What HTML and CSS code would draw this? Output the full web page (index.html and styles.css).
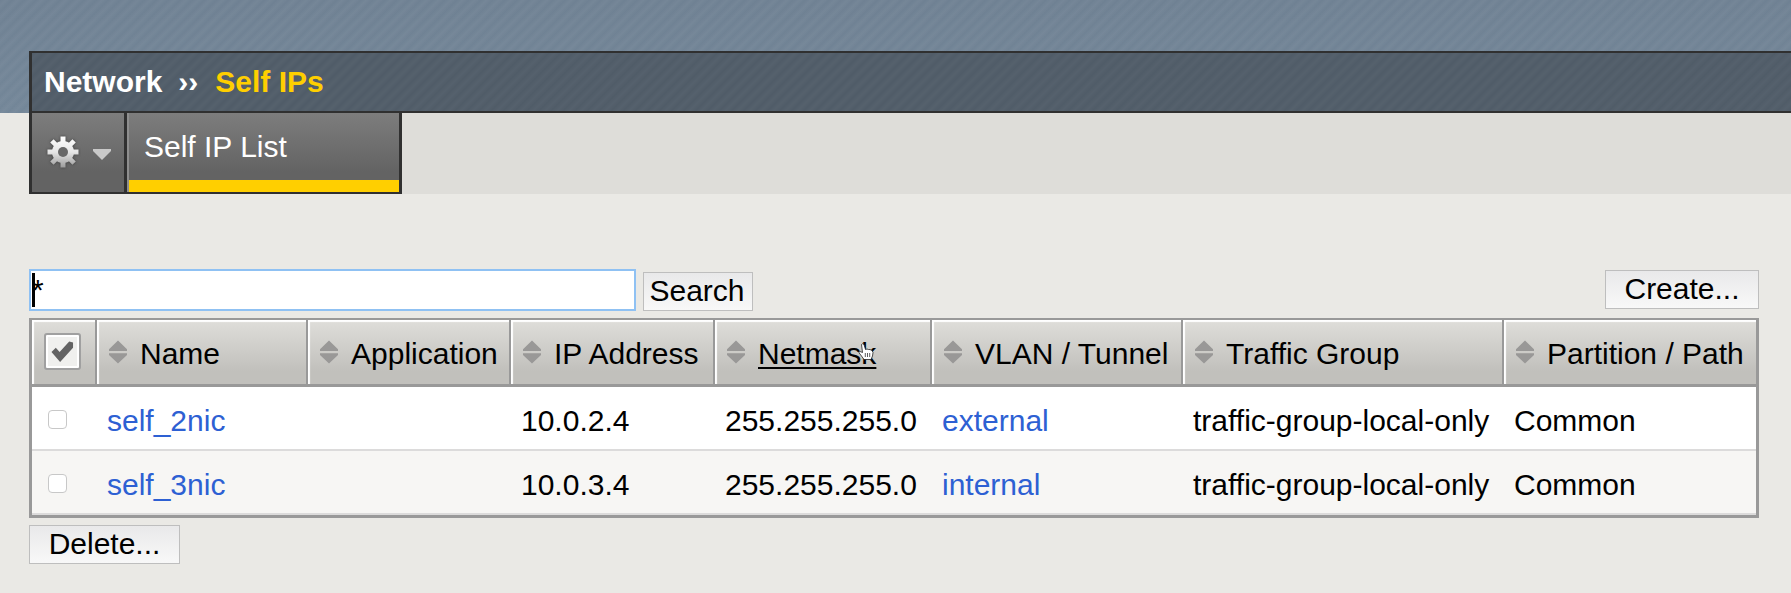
FILE: index.html
```html
<!DOCTYPE html>
<html lang="en">
<head>
<meta charset="utf-8">
<title>Self IPs</title>
<link rel="stylesheet" href="styles.css">
</head>
<body>
<svg class="defs" width="0" height="0">
  <symbol id="sort" viewBox="0 0 18 24"><path d="M9 0.5L18 9.2V11H0V9.2ZM0 13.2H18V15L9 23.5L0 15Z" fill="#999897"/></symbol>
</svg>
<header class="banner">
  <div class="crumbs"><span>Network</span><span class="sep">››</span><span class="here">Self IPs</span></div>
</header>
<nav class="tabs">
  <div class="tabgroup">
    <div class="gear">
      <svg width="36" height="36" viewBox="-18 -18 36 36">
        <defs><linearGradient id="g" x1="0" y1="-16" x2="0" y2="16" gradientUnits="userSpaceOnUse"><stop offset="0" stop-color="#fff"/><stop offset=".5" stop-color="#e6e6e6"/><stop offset="1" stop-color="#999"/></linearGradient></defs>
        <g class="cog">
          <g fill="url(#g)">
            <circle r="11"/>
            <path d="M-2.5-15.5h5v31h-5zM-15.5-2.5h31v5h-31z"/>
            <path d="M-12.8-9.4L-9.4-12.8L12.8 9.4L9.4 12.8ZM9.4-12.8L12.8-9.4L-9.4 12.8L-12.8 9.4Z"/>
          </g>
          <circle r="5" fill="#686868"/>
        </g>
      </svg>
      <svg class="caret" width="18" height="11" viewBox="0 0 18 11"><path d="M0 0H18V2L9 11L0 2Z" fill="#c9c9c9"/></svg>
    </div>
    <div class="tab">Self IP List</div>
  </div>
</nav>
<main class="content">
  <div class="toolbar">
    <div class="field"><i class="caretbar"></i><span>*</span></div>
    <div class="btn search">Search</div>
    <div class="btn create">Create...</div>
  </div>
  <div class="table">
    <div class="row head">
      <div class="th check"><div class="checkbtn"><svg width="24" height="24" viewBox="0 0 24 24"><path d="M0.500 12L5 7.500L9 12L19 1L23 2V7.500L9.500 22.500Z" fill="#636363"/></svg></div></div>
      <div class="th"><svg class="sort"><use href="#sort"/></svg><span>Name</span></div>
      <div class="th"><svg class="sort"><use href="#sort"/></svg><span>Application</span></div>
      <div class="th"><svg class="sort"><use href="#sort"/></svg><span>IP Address</span></div>
      <div class="th"><svg class="sort"><use href="#sort"/></svg><span class="hover">Netmask</span>
        <svg class="cursor" width="16" height="18" viewBox="0 0 16 18"><path d="M3.500 1.500Q4.500 0 6 1.500L7.500 6.500L9 6L10.500 6.500L12 6.500L14 7.500L15 9.500L14.500 13L13 16.500H6L3.500 13L.8 9.500Q1.500 7.500 4.500 9.500Z" fill="#fff" stroke="#222" stroke-width=".8"/><path d="M7.300 10V14M9.500 10V14M11.700 10V14" stroke="#333" stroke-width=".8"/></svg></div>
      <div class="th"><svg class="sort"><use href="#sort"/></svg><span>VLAN / Tunnel</span></div>
      <div class="th"><svg class="sort"><use href="#sort"/></svg><span>Traffic Group</span></div>
      <div class="th"><svg class="sort"><use href="#sort"/></svg><span>Partition / Path</span></div>
    </div>
    <div class="row">
      <div class="td check"><i class="box"></i></div><div class="td link">self_2nic</div><div class="td"></div><div class="td">10.0.2.4</div><div class="td">255.255.255.0</div><div class="td link">external</div><div class="td">traffic-group-local-only</div><div class="td">Common</div>
    </div>
    <div class="row alt">
      <div class="td check"><i class="box"></i></div><div class="td link">self_3nic</div><div class="td"></div><div class="td">10.0.3.4</div><div class="td">255.255.255.0</div><div class="td link">internal</div><div class="td">traffic-group-local-only</div><div class="td">Common</div>
    </div>
  </div>
  <div class="btn delete">Delete...</div>
</main>
</body>
</html>
```

FILE: styles.css
```css
* { box-sizing: border-box; }
body {
  margin: 0;
  width: 1791px;
  height: 593px;
  overflow: hidden;
  background: #eae9e5;
  color: #000;
  font: 30px/34px "Liberation Sans", Arial, sans-serif;
  white-space: nowrap;
}
.defs { position: absolute; }
.banner {
  height: 113px;
  padding: 51px 0 0 29px;
  background:
    repeating-linear-gradient(135deg, rgba(255,255,255,0) 0, rgba(255,255,255,.045) 4.250px, rgba(255,255,255,0) 8.500px),
    linear-gradient(#6f8193, #738698);
}
.crumbs {
  display: flex;
  height: 62px;
  padding: 12px 0 0 12px;
  border: solid #303030;
  border-width: 2px 0 2px 3px;
  background:
    repeating-linear-gradient(135deg, rgba(255,255,255,0) 0, rgba(255,255,255,.03) 4.250px, rgba(255,255,255,0) 8.500px),
    #505c68;
  color: #fff;
  font-weight: bold;
}
.sep { margin: 0 17px 0 16px; }
.here { color: #ffcf00; }
.tabs {
  height: 81px;
  margin-left: 29px;
  background: #deddd9;
}
.tabgroup {
  display: flex;
  width: 373px;
  height: 81px;
  border: solid #303030;
  border-width: 0 3px 2px;
}
.gear {
  display: flex;
  align-items: center;
  width: 95px;
  padding: 0 0 2px 13px;
  border-right: 3px solid #303030;
  background: linear-gradient(#7d7d7d, #636363 75%);
}
.cog { filter: drop-shadow(0 0 1.500px #3c3c3c); }
.caret { margin: 5px 0 0 12px; }
.tab {
  flex: 1;
  padding: 17px 0 0 15px;
  border-left: 2px solid #8e8e8e;
  background: linear-gradient(#ffcf00, #ffcf00) left bottom / 100% 12px no-repeat, linear-gradient(#7d7d7d, #636363 75%);
  color: #fff;
}
.content { padding: 75px 32px 0 29px; }
.toolbar {
  display: flex;
  height: 49px;
}
.field {
  display: flex;
  width: 607px;
  height: 42px;
  padding: 2px 0 0 1px;
  border: 2px solid #8fc1f3;
  background: #fff;
}
.caretbar {
  width: 3px;
  height: 34px;
  background: #000;
}
.field span { margin-left: -3px; }
.btn {
  height: 39px;
  padding-top: 1px;
  border: 1px solid #bebebe;
  background: linear-gradient(#e9e9ea, #f8f8f8);
  text-align: center;
}
.search {
  width: 110px;
  padding-right: 2px;
  margin: 3px 0 0 7px;
}
.create { width: 154px; margin: 1px 0 0 auto; }
.delete { width: 151px; margin-top: 7px; }
.table {
  border: 3px solid #999;
  border-top-width: 2px;
}
.row {
  display: grid;
  grid-template-columns: 63px 211px 203px 204px 217px 251px 321px 254px;
  height: 64px;
  border-bottom: 2px solid #dcdbdb;
  background: #fff;
}
.alt { background: #f7f6f4; }
.head {
  height: 67px;
  border-bottom: 3px solid #999;
}
.th {
  position: relative;
  display: flex;
  align-items: center;
  padding: 0 0 0 12px;
  border-left: 2px solid #999;
  box-shadow: inset 3px 3px 1px -1px #fff;
  background: linear-gradient(#dfdeda, #c1c0bc 80%);
}
.th.check {
  padding: 0 0 2px 12px;
  border-left: 0;
}
.th span { padding-top: 3px; }
.sort {
  width: 18px;
  height: 24px;
  margin: 0 13px 0 0;
}
.hover { text-decoration: underline; text-decoration-thickness: 2px; text-underline-offset: 3px; }
.cursor { position: absolute; left: 143px; top: 23px; }
.checkbtn {
  display: flex;
  width: 37px;
  height: 37px;
  padding: 5px;
  border: 2px solid #a0a0a0;
  border-radius: 3px;
  background: #f0f0ee;
  box-shadow: inset 0 0 0 2px #fff;
}
.td { padding: 17px 0 0 12px; }
.td.check { padding: 23px 0 0 16px; }
.link { color: #2d60d3; }
.box {
  display: block;
  width: 19px;
  height: 19px;
  border: 1px solid #c8c8c8;
  border-radius: 4px;
  background: #fff;
}
```
